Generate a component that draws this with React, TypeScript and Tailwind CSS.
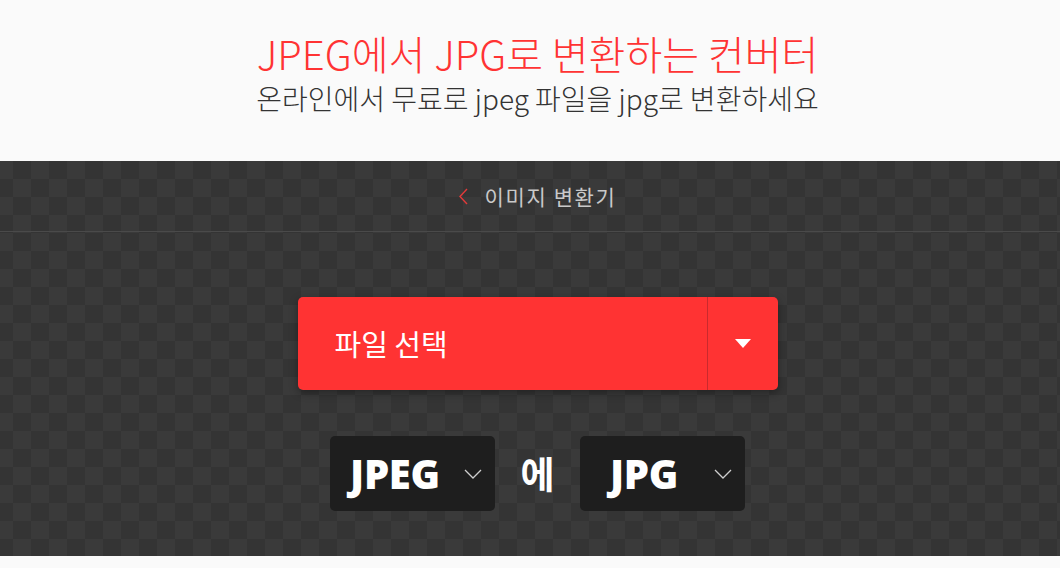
const FORMATS = ['JPEG', 'JPG'];

function FormatSelect({ label }: { label: string }) {
  return (
    <div className="flex h-[75px] w-[165px] items-center rounded-[5px] bg-[#1e1e1e]">
      <span className="flex-1 text-center font-['Open_Sans','Noto_Sans_CJK_KR',sans-serif] text-[40px] font-extrabold leading-none tracking-[-0.3px] text-white">
        {label}
      </span>
      <svg className="ml-[5px] mr-[13px]" width="18" height="10" viewBox="0 0 18 10" fill="none">
        <path d="M1 1l8 8 8-8" stroke="#cfcfcf" strokeWidth="1.3" />
      </svg>
    </div>
  );
}

export default function App() {
  return (
    <div className="min-h-[568px] bg-[#fafafa] font-['Noto_Sans_CJK_KR','Noto_Sans',sans-serif]">
      {/* Page header */}
      <header className="flex h-[161px] flex-col items-center pl-[15px] pt-[30px]">
        <h1 className="text-[40px] font-light leading-[46px] text-[#ff3333]">
          JPEG에서 JPG로 변환하는 컨버터
        </h1>
        <p className="mt-[5px] text-[28px] font-light leading-[34px] text-[#333333]">
          온라인에서 무료로 jpeg 파일을 jpg로 변환하세요
        </p>
      </header>

      {/* Converter panel */}
      <section className="h-[395px] bg-[conic-gradient(#343434_25%,#3a3a3a_0_50%,#343434_0_75%,#3a3a3a_0)] bg-[length:36px_36px] bg-[position:-5px_0px]">
        <div className="flex h-[71px] items-center justify-center gap-[17px] border-b border-[#4a4a4a] pl-[15px]">
          <svg width="9" height="17" viewBox="0 0 9 17" fill="none">
            <path d="M8 1L1 8.5 8 16" stroke="#e23a3a" strokeWidth="1.4" />
          </svg>
          <span className="text-[21px] leading-none tracking-[1.6px] text-[#c9c9c9]">이미지 변환기</span>
        </div>

        <div className="flex flex-col items-center pl-[15px] pt-[65px]">
          {/* Choose file button */}
          <div className="flex h-[93px] w-[480px] rounded-[5px] bg-[#ff3333] shadow-[0_3px_8px_rgba(0,0,0,0.35)]">
            <div className="flex flex-1 items-center pl-[37px] text-[29px] leading-none text-white">파일 선택</div>
            <div className="w-px bg-[#c92a2e]" />
            <div className="flex w-[70px] items-center justify-center">
              <svg width="16" height="9" viewBox="0 0 16 9">
                <path d="M0 0h16L8 9z" fill="#ffffff" />
              </svg>
            </div>
          </div>

          {/* Format pickers */}
          <div className="mt-[46px] flex items-center gap-[25px]">
            <FormatSelect label={FORMATS[0]} />
            <span className="text-[37px] font-bold leading-none text-white">에</span>
            <FormatSelect label={FORMATS[1]} />
          </div>
        </div>
      </section>
    </div>
  );
}
